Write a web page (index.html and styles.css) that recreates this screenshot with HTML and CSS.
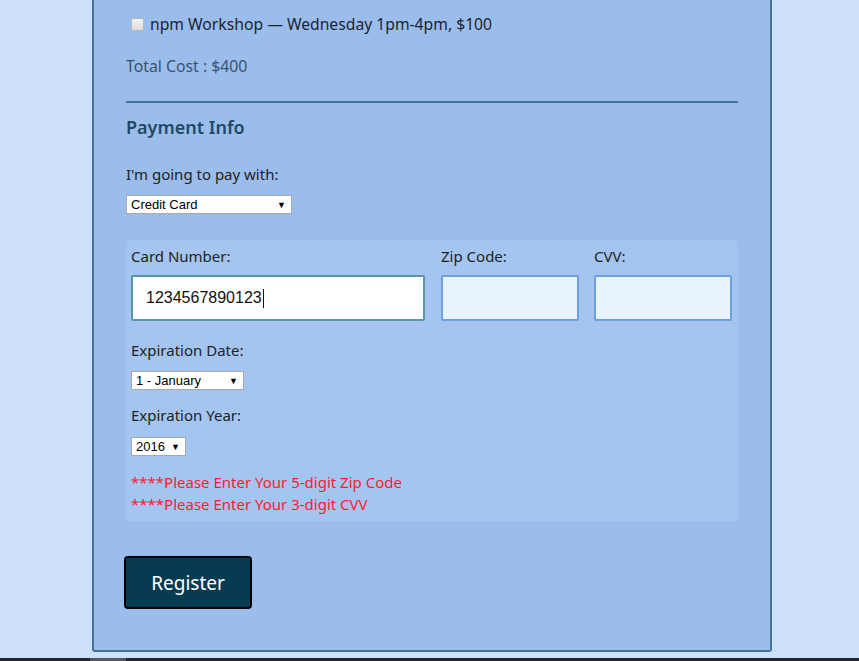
FILE: index.html
```html
<!DOCTYPE html>
<html>
<head>
<meta charset="utf-8">
<link rel="stylesheet" href="styles.css">
</head>
<body>
<div class="page">
  <form class="container">
    <label class="activity"><input type="checkbox" class="check"> npm Workshop — Wednesday 1pm-4pm, $100</label>
    <p class="total">Total Cost : $400</p>
    <hr class="rule">
    <h2 class="heading">Payment Info</h2>
    <p class="label pay-label">I'm going to pay with:</p>
    <div class="select sel-payment"><span>Credit Card</span><span class="arrow">▼</span></div>
    <div class="card">
      <div class="fields">
        <div class="field f-num">
          <div class="label">Card Number:</div>
          <div class="input focused">1234567890123<span class="caret"></span></div>
        </div>
        <div class="field f-zip">
          <div class="label">Zip Code:</div>
          <div class="input empty"></div>
        </div>
        <div class="field f-cvv">
          <div class="label">CVV:</div>
          <div class="input empty"></div>
        </div>
      </div>
      <div class="label exp-label">Expiration Date:</div>
      <div class="select sel-month"><span>1 - January</span><span class="arrow">▼</span></div>
      <div class="label year-label">Expiration Year:</div>
      <div class="select sel-year"><span>2016</span><span class="arrow">▼</span></div>
      <div class="errors">
        <div class="error">****Please Enter Your 5-digit Zip Code</div>
        <div class="error">****Please Enter Your 3-digit CVV</div>
      </div>
    </div>
    <button type="button" class="register">Register</button>
  </form>
</div>
<div class="bottombar"><span class="thumb"></span></div>
</body>
</html>
```
FILE: styles.css
```css
html, body {
  margin: 0;
  padding: 0;
}
body {
  background: #cce0fa;
  font-family: "Noto Sans", "Open Sans", sans-serif;
  color: #222;
  height: 661px;
  overflow: hidden;
  position: relative;
}
.page {
  padding-left: 92px;
}
.container {
  width: 612px;
  background: #9bbdec;
  border: 2px solid #44729a;
  border-top: none;
  border-radius: 0 0 3px 3px;
  padding: 0 32px 38px 32px;
  height: 612px;
}
.activity {
  display: flex;
  align-items: center;
  padding-top: 14px;
  height: 20px;
  font-size: 15.7px;
  color: #1c2430;
  padding-left: 5px;
}
.check {
  width: 13px;
  height: 13px;
  margin: 0 6px 0 0;
  appearance: none;
  -webkit-appearance: none;
  background: linear-gradient(#f4f4f4, #dcdcdc);
  border: 1px solid #b8b8b8;
  border-radius: 2px;
  box-sizing: border-box;
}
.total {
  margin: 0;
  padding-top: 21px;
  height: 22px;
  line-height: 22px;
  font-size: 15.8px;
  color: #3a536b;
}
.rule {
  margin: 24px 0 0 0;
  border: none;
  height: 2px;
  background: #44729a;
}
.heading {
  margin: 0;
  padding-top: 11px;
  font-size: 18px;
  line-height: 26px;
  font-weight: 600;
  color: #1f4a62;
}
.label {
  font-size: 15px;
  line-height: 20px;
  color: #222;
}
.pay-label {
  margin: 24px 0 0 0;
}
.select {
  display: flex;
  justify-content: space-between;
  align-items: center;
  box-sizing: border-box;
  height: 19px;
  background: #fff;
  border: 1px solid #a8a8a8;
  font-family: "Liberation Sans", Arial, sans-serif;
  font-size: 13px;
  color: #000;
  padding: 0 5px 0 4px;
}
.arrow {
  font-size: 9px;
}
.sel-payment {
  width: 166px;
  margin-top: 11px;
}
.card {
  margin-top: 26px;
  background: #a4c5f0;
  border-radius: 4px;
  padding: 6px 6px 6px 5px;
  height: 269px;
}
.fields {
  display: flex;
  gap: 16px;
}
.field .label {
  height: 20px;
  line-height: 20px;
}
.f-num { width: 294px; }
.f-zip { width: 138px; }
.f-cvv { width: 138px; margin-left: -1px; }
.input {
  box-sizing: border-box;
  height: 46px;
  margin-top: 9px;
  border-radius: 2px;
  font-family: "Liberation Sans", Arial, sans-serif;
  font-size: 16px;
  color: #111;
  display: flex;
  align-items: center;
  padding-left: 13px;
}
.focused {
  background: #fff;
  border: 2px solid #5b95a6;
}
.caret {
  display: inline-block;
  width: 1px;
  height: 19px;
  background: #111;
  margin-left: 1px;
}
.empty {
  background: #e8f4fb;
  border: 2px solid #6e9fe0;
}
.exp-label {
  margin-top: 19px;
}
.year-label {
  margin-top: 15px;
}
.sel-month {
  width: 113px;
  margin-top: 11px;
}
.sel-year {
  width: 55px;
  margin-top: 12px;
}
.errors {
  margin-top: 15px;
}
.error {
  color: #ff1a2e;
  font-size: 15px;
  line-height: 22px;
}
.register {
  display: block;
  margin: 35px 0 0 -2px;
  width: 128px;
  height: 53px;
  background: #073b52;
  border: 2px solid #000;
  border-radius: 4px;
  color: #fff;
  font-family: "Noto Sans", "Open Sans", sans-serif;
  font-size: 19px;
  cursor: pointer;
}
.bottombar {
  position: absolute;
  left: 0;
  right: 0;
  bottom: 0;
  height: 3px;
  background: #22252b;
}
.thumb {
  position: absolute;
  left: 90px;
  width: 36px;
  top: 0;
  bottom: 0;
  background: #55585e;
}
```
